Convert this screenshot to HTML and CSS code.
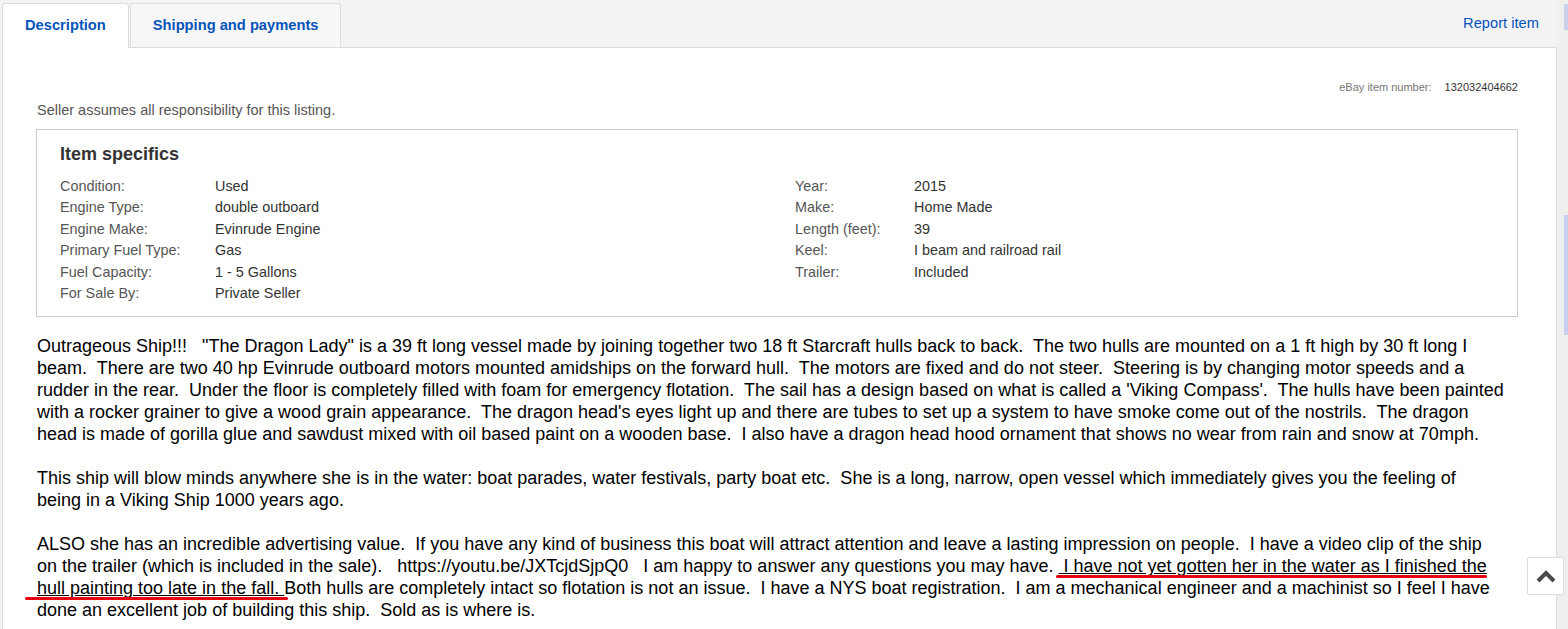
FILE: index.html
```html
<!DOCTYPE html>
<html lang="en">
<head>
    <meta charset="UTF-8">
    <meta name="viewport" content="width=device-width, initial-scale=1.0">
    <title>Item description</title>
    <link rel="stylesheet" href="styles.css">
</head>
<body>
    <div class="page">
        <main class="main">
            <div class="tabbar">
                <div class="tabs">
                    <a class="tab tab-active" href="#">Description</a>
                    <a class="tab" href="#">Shipping and payments</a>
                </div>
                <a class="report" href="#">Report item</a>
            </div>

            <div class="panel">
                <div class="item-number">
                    <span class="item-label">eBay item number:</span>
                    <span class="item-value">132032404662</span>
                </div>
                <p class="seller-note">Seller assumes all responsibility for this listing.</p>

                <div class="specifics">
                    <h2>Item specifics</h2>
                    <div class="spec-cols">
                        <div class="spec-col spec-left">
                            <span class="spec-label">Condition:</span><span class="spec-value">Used</span>
                            <span class="spec-label">Engine Type:</span><span class="spec-value">double outboard</span>
                            <span class="spec-label">Engine Make:</span><span class="spec-value">Evinrude Engine</span>
                            <span class="spec-label">Primary Fuel Type:</span><span class="spec-value">Gas</span>
                            <span class="spec-label">Fuel Capacity:</span><span class="spec-value">1 - 5 Gallons</span>
                            <span class="spec-label">For Sale By:</span><span class="spec-value">Private Seller</span>
                        </div>
                        <div class="spec-col spec-right">
                            <span class="spec-label">Year:</span><span class="spec-value">2015</span>
                            <span class="spec-label">Make:</span><span class="spec-value">Home Made</span>
                            <span class="spec-label">Length (feet):</span><span class="spec-value">39</span>
                            <span class="spec-label">Keel:</span><span class="spec-value">I beam and railroad rail</span>
                            <span class="spec-label">Trailer:</span><span class="spec-value">Included</span>
                        </div>
                    </div>
                </div>

                <div class="desc">
<p>Outrageous Ship!!!   "The Dragon Lady" is a 39 ft long vessel made by joining together two 18 ft Starcraft hulls back to back.  The two hulls are mounted on a 1 ft high by 30 ft long I<br>beam.  There are two 40 hp Evinrude outboard motors mounted amidships on the forward hull.  The motors are fixed and do not steer.  Steering is by changing motor speeds and a<br>rudder in the rear.  Under the floor is completely filled with foam for emergency flotation.  The sail has a design based on what is called a 'Viking Compass'.  The hulls have been painted<br>with a rocker grainer to give a wood grain appearance.  The dragon head's eyes light up and there are tubes to set up a system to have smoke come out of the nostrils.  The dragon<br>head is made of gorilla glue and sawdust mixed with oil based paint on a wooden base.  I also have a dragon head hood ornament that shows no wear from rain and snow at 70mph.</p>
<p>This ship will blow minds anywhere she is in the water: boat parades, water festivals, party boat etc.  She is a long, narrow, open vessel which immediately gives you the feeling of<br>being in a Viking Ship 1000 years ago.</p>
<p>ALSO she has an incredible advertising value.  If you have any kind of business this boat will attract attention and leave a lasting impression on people.  I have a video clip of the ship<br>on the trailer (which is included in the sale).   https://youtu.be/JXTcjdSjpQ0   I am happy to answer any questions you may have. <span class="marked marked-a"> I have not yet gotten her in the water as I finished the</span><br><span class="marked marked-b">hull painting too late in the fall. </span>Both hulls are completely intact so flotation is not an issue.  I have a NYS boat registration.  I am a mechanical engineer and a machinist so I feel I have<br>done an excellent job of building this ship.  Sold as is where is.</p>
                </div>
            </div>
        </main>

        <aside class="edge">
            <div class="edge-top"></div>
            <div class="edge-thumb"></div>
        </aside>
    </div>

    <button class="to-top" type="button" aria-label="Back to top">
        <svg width="20" height="14" viewBox="0 0 20 14">
            <polyline points="2,12 10,4 18,12" fill="none" stroke="#4a4a4a" stroke-width="4" stroke-linejoin="miter"/>
        </svg>
    </button>
</body>
</html>
```

FILE: styles.css
```css
body {
    margin: 0;
    font-family: Arial, "Liberation Sans", sans-serif;
    background-color: #f3f3f3;
    color: #333;
}
.page {
    display: flex;
    min-height: 629px;
}
.main {
    flex: 1;
    padding-left: 2px;
    display: flex;
    flex-direction: column;
}

/* tabs */
.tabbar {
    display: flex;
    justify-content: space-between;
    height: 47px;
    padding-right: 18px;
}
.tabs {
    display: flex;
    padding-top: 3px;
}
.tab {
    box-sizing: border-box;
    height: 44px;
    padding: 0 22px 0 22px;
    line-height: 43px;
    font-size: 14.7px;
    font-weight: bold;
    color: #0654ba;
    text-decoration: none;
    background: #f7f7f7;
    border: 1px solid #dddddd;
    border-bottom: none;
    border-radius: 3px 3px 0 0;
}
.tab + .tab {
    margin-left: 1px;
}
.tab-active {
    height: 45px;
    margin-bottom: -1px;
    background: #fff;
    position: relative;
    z-index: 1;
}
.report {
    margin-top: 14px;
    line-height: 18px;
    font-size: 14.7px;
    color: #0654ba;
    text-decoration: none;
}

/* panel */
.panel {
    flex: 1;
    background: #fff;
    border: 1px solid #dddddd;
    border-bottom: none;
    padding: 0 38px 0 34px;
}
.item-number {
    display: flex;
    justify-content: flex-end;
    gap: 13px;
    margin-top: 32px;
    font-size: 11px;
    line-height: 14px;
}
.item-label {
    color: #767676;
}
.item-value {
    color: #333;
}
.seller-note {
    margin: 8px 0 0;
    font-size: 14.5px;
    line-height: 17px;
    color: #555;
}

/* item specifics */
.specifics {
    margin: 10px 0 0 -1px;
    border: 1px solid #cccccc;
    padding: 13px 23px 12px;
}
.specifics h2 {
    margin: 0 0 11px;
    font-size: 18px;
    line-height: 22px;
    color: #333;
}
.spec-cols {
    display: flex;
}
.spec-col {
    display: grid;
    font-size: 14.4px;
    line-height: 21.4px;
}
.spec-left {
    width: 735px;
    grid-template-columns: 155px 1fr;
}
.spec-right {
    flex: 1;
    grid-template-columns: 119px 1fr;
    align-content: start;
}
.spec-label {
    color: #555;
}
.spec-value {
    color: #333;
}

/* seller description */
.desc {
    margin-top: 18px;
    font-size: 18px;
    line-height: 22px;
    color: #000;
}
.desc p {
    margin: 0 0 22px;
    white-space: pre-wrap;
}
.marked {
    position: relative;
    text-decoration: underline;
}
.marked::after {
    content: "";
    position: absolute;
    bottom: -2px;
    height: 3px;
    background: #e60010;
    border-radius: 2px;
}
.marked-a::after {
    left: -3px;
    right: 0;
}
.marked-b::after {
    left: -12px;
    right: -4px;
}

/* right edge strip */
.edge {
    width: 11px;
    background: #efefed;
    display: flex;
    flex-direction: column;
}
.edge-top {
    margin: 4px 0 0 7px;
    height: 26px;
    border-left: 4px solid #c9d1ec;
}
.edge-thumb {
    margin: 185px 0 0 7px;
    height: 120px;
    border-left: 4px solid #c6cff0;
}

/* back to top */
.to-top {
    position: fixed;
    right: 4px;
    bottom: 34px;
    width: 37px;
    height: 38px;
    padding: 0;
    background: #fff;
    border: 1px solid #dddddd;
    border-radius: 2px;
    display: flex;
    align-items: center;
    justify-content: center;
    cursor: pointer;
}
```
